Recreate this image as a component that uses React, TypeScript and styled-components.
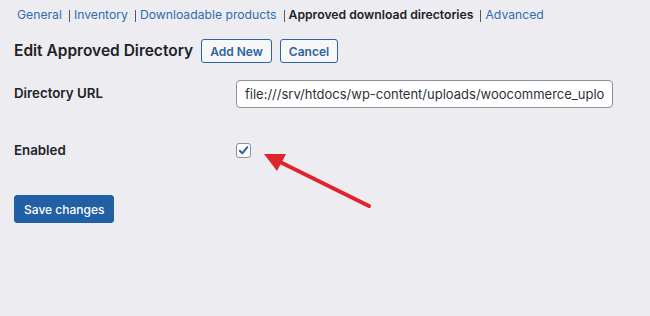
import React from "react";
import styled, { createGlobalStyle } from "styled-components";

const Global = createGlobalStyle`
  html, body { margin: 0; padding: 0; background: #edecf0; }
  body {
    font-family: Inter, "Liberation Sans", sans-serif;
    color: #1d2327;
    -webkit-font-smoothing: antialiased;
  }
`;

const Page = styled.div`
  position: relative;
  width: 650px;
  height: 316px;
  padding: 6px 14px 0 14px;
  box-sizing: border-box;
  overflow: hidden;
`;

const Tabs = styled.ul`
  display: flex;
  align-items: center;
  list-style: none;
  margin: 0 0 0 3px;
  padding: 0;
  font-size: 12.2px;
  line-height: 18px;
`;

const Tab = styled.li<{ $current?: boolean }>`
  display: flex;
  align-items: center;
  color: ${(p) => (p.$current ? "#1d2327" : "#2f6db0")};
  font-weight: ${(p) => (p.$current ? 600 : 400)};
`;

const Sep = styled.span`
  display: inline-block;
  width: 1px;
  height: 12px;
  background: #50575e;
  margin: 1px 4px 0 7px;
`;

const HeadingRow = styled.div`
  display: flex;
  align-items: center;
  gap: 8px;
  margin-top: 15px;
`;

const Title = styled.h1`
  margin: 0;
  font-size: 15.5px;
  font-weight: 600;
  color: #1d2327;
  line-height: 22px;
`;

const OutlineButton = styled.button`
  font-family: inherit;
  font-size: 12px;
  font-weight: 600;
  color: #2f62a4;
  background: #f6f7f7;
  border: 1px solid #2f62a4;
  border-radius: 3px;
  height: 24px;
  padding: 0 8px;
  cursor: pointer;
`;

const Form = styled.div`
  display: grid;
  grid-template-columns: 222px 377px;
  margin-top: 10px;
`;

const Label = styled.div<{ $h: number; $pt: number }>`
  font-size: 13.3px;
  font-weight: 600;
  color: #1d2327;
  height: ${(p) => p.$h}px;
  padding-top: ${(p) => p.$pt}px;
  box-sizing: border-box;
`;

const Cell = styled.div<{ $h: number }>`
  height: ${(p) => p.$h}px;
  box-sizing: border-box;
`;

const UrlInput = styled.input`
  width: 377px;
  height: 28px;
  box-sizing: border-box;
  border: 1px solid #8c8f94;
  border-radius: 4px;
  background: #fff;
  font-family: inherit;
  font-size: 13px;
  color: #2c3338;
  padding: 0 8px;
  margin-top: 7px;
  outline: none;
`;

const CheckBox = styled.span`
  display: inline-flex;
  align-items: center;
  justify-content: center;
  width: 15px;
  height: 15px;
  box-sizing: border-box;
  border: 1px solid #8c8f94;
  border-radius: 3px;
  background: #fff;
  margin-top: 6px;
`;

const SaveButton = styled.button`
  font-family: inherit;
  font-size: 12px;
  font-weight: 500;
  color: #fff;
  background: #2260a6;
  border: 1px solid #2260a6;
  border-radius: 3px;
  height: 28px;
  padding: 0 9px;
  margin-top: 18px;
  cursor: pointer;
`;

const Arrow = styled.svg`
  position: absolute;
  left: 0;
  top: 0;
  pointer-events: none;
`;

export default function App() {
  return (
    <>
      <Global />
      <Page>
        <Tabs>
          <Tab>General</Tab>
          <Tab><Sep />Inventory</Tab>
          <Tab><Sep />Downloadable products</Tab>
          <Tab $current><Sep />Approved download directories</Tab>
          <Tab><Sep />Advanced</Tab>
        </Tabs>
        <HeadingRow>
          <Title>Edit Approved Directory</Title>
          <OutlineButton>Add New</OutlineButton>
          <OutlineButton>Cancel</OutlineButton>
        </HeadingRow>
        <Form>
          <Label $h={64} $pt={12}>Directory URL</Label>
          <Cell $h={64}>
            <UrlInput readOnly value="file:///srv/htdocs/wp-content/uploads/woocommerce_uploads/" />
          </Cell>
          <Label $h={40} $pt={5}>Enabled</Label>
          <Cell $h={40}>
            <CheckBox>
              <svg width="11" height="11" viewBox="0 0 11 11">
                <path d="M1.8 5.8 L4.3 8.3 L9.3 2.2" fill="none" stroke="#2f62a4" strokeWidth="2" strokeLinecap="round" strokeLinejoin="round" />
              </svg>
            </CheckBox>
          </Cell>
        </Form>
        <SaveButton>Save changes</SaveButton>
        <Arrow width="650" height="316" viewBox="0 0 650 316">
          <line x1="369" y1="206" x2="276" y2="160" stroke="#e0242c" strokeWidth="4" strokeLinecap="round" />
          <polygon points="264,154 286,154 277,171" fill="#e0242c" />
        </Arrow>
      </Page>
    </>
  );
}
